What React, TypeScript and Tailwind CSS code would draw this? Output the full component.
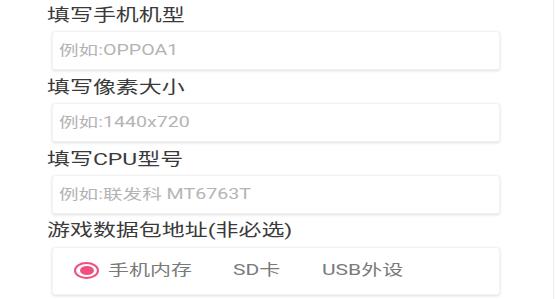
import React from "react";

const font = { fontFamily: 'Roboto, "Noto Sans CJK SC", sans-serif' };

function Title({ children }: { children: React.ReactNode }) {
  return (
    <div className="h-[23px] leading-[23px] text-[17px] text-[#3a3a3a] whitespace-nowrap">
      <span className="inline-block origin-left scale-x-[1.35]">{children}</span>
    </div>
  );
}

function Card({ children, h = "h-[39px]" }: { children: React.ReactNode; h?: string }) {
  return (
    <div
      className={`ml-[5px] w-[448px] ${h} bg-white rounded-[3px] shadow-[0_1px_3px_rgba(0,0,0,0.13)] border border-[#f2f2f2] flex items-center`}
    >
      {children}
    </div>
  );
}

function Placeholder({ children }: { children: React.ReactNode }) {
  return (
    <span className="ml-[6px] inline-block origin-left scale-x-[1.4] text-[14px] text-[#b4b4b4] whitespace-nowrap">
      {children}
    </span>
  );
}

export default function App() {
  return (
    <div className="relative w-[555px] h-[299px] bg-white overflow-hidden" style={font}>
      <div className="absolute right-[1px] top-0 bottom-0 w-px bg-[#ececec]" />
      <div className="flex flex-col pl-[47px] pt-[4px]">
        <Title>填写手机机型</Title>
        <div className="mt-[4px]">
          <Card>
            <Placeholder>例如:OPPOA1</Placeholder>
          </Card>
        </div>
        <div className="mt-[6px]">
          <Title>填写像素大小</Title>
        </div>
        <div className="mt-[4px]">
          <Card>
            <Placeholder>例如:1440x720</Placeholder>
          </Card>
        </div>
        <div className="mt-[6px]">
          <Title>填写CPU型号</Title>
        </div>
        <div className="mt-[4px]">
          <Card>
            <Placeholder>例如:联发科 MT6763T</Placeholder>
          </Card>
        </div>
        <div className="mt-[5px]">
          <Title>游戏数据包地址(非必选)</Title>
        </div>
        <div className="mt-[5px]">
          <Card h="h-[48px]">
            <div className="relative h-full w-full text-[15px] text-[#7a7a7a]">
              <div className="absolute left-[21px] top-[14px] w-[25px] h-[17px] rounded-[50%] border-[2.5px] border-[#f0507f] flex items-center justify-center">
                <div className="w-[14px] h-[9px] rounded-[50%] bg-[#f0507f]" />
              </div>
              <span className="absolute left-[55px] top-[11px] inline-block origin-left scale-x-[1.4] whitespace-nowrap">手机内存</span>
              <span className="absolute left-[180px] top-[11px] inline-block origin-left scale-x-[1.4] whitespace-nowrap">SD卡</span>
              <span className="absolute left-[269px] top-[11px] inline-block origin-left scale-x-[1.4] whitespace-nowrap">USB外设</span>
            </div>
          </Card>
        </div>
      </div>
    </div>
  );
}
